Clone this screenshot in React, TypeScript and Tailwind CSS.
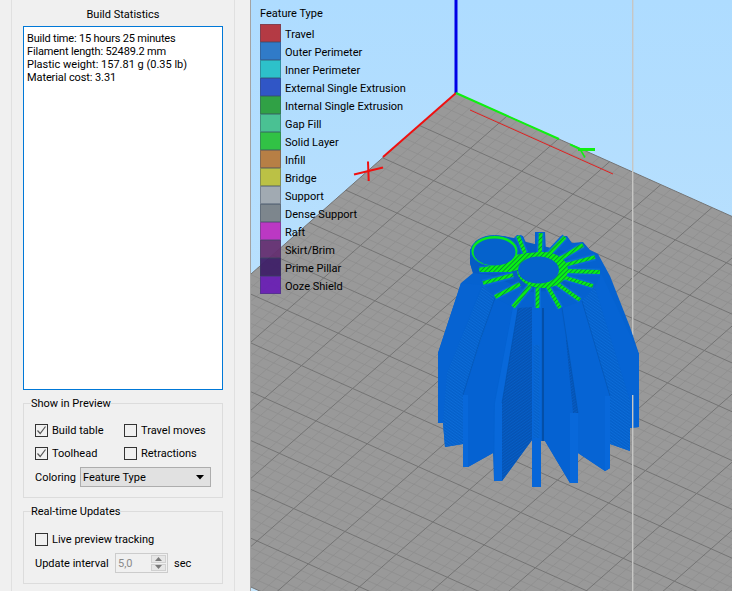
import React from "react";

const legend: [string, string][] = [
  ["Travel", "#b5323a"],
  ["Outer Perimeter", "#2a76c6"],
  ["Inner Perimeter", "#26c0c8"],
  ["External Single Extrusion", "#2a4fc4"],
  ["Internal Single Extrusion", "#2a9e3c"],
  ["Gap Fill", "#45c08e"],
  ["Solid Layer", "#2bc13c"],
  ["Infill", "#b87a3c"],
  ["Bridge", "#bcc03c"],
  ["Support", "#a0a8ae"],
  ["Dense Support", "#7a8288"],
  ["Raft", "#bc30c0"],
  ["Skirt/Brim", "#653070"],
  ["Prime Pillar", "#3f2068"],
  ["Ooze Shield", "#6a20b4"],
];

function Check({ on, label, w }: { on?: boolean; label: string; w?: string }) {
  return (
    <div className={`flex items-center whitespace-nowrap ${w ?? ""}`}>
      <span className="w-[13px] h-[13px] border border-[#333333] bg-[#f0f0f0] flex items-center justify-center shrink-0">
        {on && (
          <svg width="11" height="11" viewBox="0 0 11 11" fill="none">
            <path d="M1.5 5.5 L4.2 8.5 L9.5 1.5" stroke="#555555" strokeWidth="1.2" />
          </svg>
        )}
      </span>
      <span className="ml-1 pt-px">{label}</span>
    </div>
  );
}

const O = [456, 93];
const U = [51.2, 22.9];
const V = [-36.7, 32.4];
const P = (a: number, b: number) => [O[0] + a * U[0] + b * V[0], O[1] + a * U[1] + b * V[1]];

function gridLines() {
  const lines: React.ReactElement[] = [];
  const A = 12;
  const B = 12;
  for (let i = 0; i <= A * 5; i++) {
    if (i % 5 === 0) continue;
    const [x1, y1] = P(i / 5, 0);
    const [x2, y2] = P(i / 5, B);
    lines.push(<line key={`a${i}`} x1={x1} y1={y1} x2={x2} y2={y2} stroke="#8e8e8e" strokeWidth="0.8" />);
  }
  for (let i = 0; i <= B * 5; i++) {
    if (i % 5 === 0) continue;
    const [x1, y1] = P(0, i / 5);
    const [x2, y2] = P(A, i / 5);
    lines.push(<line key={`b${i}`} x1={x1} y1={y1} x2={x2} y2={y2} stroke="#8e8e8e" strokeWidth="0.8" />);
  }
  for (let i = 0; i <= A; i++) {
    const [x1, y1] = P(i, 0);
    const [x2, y2] = P(i, B);
    lines.push(<line key={`c${i}`} x1={x1} y1={y1} x2={x2} y2={y2} stroke="#747474" strokeWidth="1" />);
  }
  for (let i = 0; i <= B; i++) {
    const [x1, y1] = P(0, i);
    const [x2, y2] = P(A, i);
    lines.push(<line key={`d${i}`} x1={x1} y1={y1} x2={x2} y2={y2} stroke="#747474" strokeWidth="1" />);
  }
  return lines;
}

const spokes = [
  [525, 253, 518, 236],
  [540, 253, 540.7, 233],
  [548, 255, 565, 237],
  [558, 260, 583, 245],
  [565, 265, 595, 257],
  [566, 271, 600, 272],
  [563, 277, 593, 286],
  [556, 283, 580, 300],
  [548, 287, 560, 308],
  [537.5, 288, 537.5, 308],
  [530, 286, 513, 307],
  [520, 284, 495, 297],
  [513, 275, 483, 283],
  [512, 269, 479.5, 269.5],
];

const silhouette =
  "470,250 476,241 487,236 503,236 514,238 517,235 523,236 530,252 535,252 535,232 545,232 546,252 561,236 567,236 572,243 583,242 590,250 598,254 610,276 630,327 639,354 639,427 630,428 630,451 610,444 610,468 605,471 578,453 578,483 570,483 545,441 541,441 541,487 532,487 532,440 502,481 494,481 493,453 468,467 463,467 463,444 445,447 443,423 438,423 438,353 461,283 473,273 470,263";

function Viewport() {
  return (
    <svg width="481" height="591" viewBox="251 0 481 591" className="block">
      <defs>
        <linearGradient id="sky" x1="0" y1="0" x2="0" y2="1">
          <stop offset="0" stopColor="#aedcff" />
          <stop offset="1" stopColor="#c4e4fb" />
        </linearGradient>
        <pattern id="stripe" width="3.2" height="3.2" patternUnits="userSpaceOnUse" patternTransform="rotate(-45)">
          <rect width="3.2" height="3.2" fill="#08f014" />
          <rect width="3.2" height="0.9" fill="#0a8a3c" />
        </pattern>
        <pattern id="hatch" width="2.4" height="2.4" patternUnits="userSpaceOnUse" patternTransform="rotate(-35)">
          <rect width="2.4" height="2.4" fill="#0553b4" />
          <rect width="2.4" height="1" fill="#065ec6" />
        </pattern>
        <pattern id="hatch2" width="2.4" height="2.4" patternUnits="userSpaceOnUse" patternTransform="rotate(35)">
          <rect width="2.4" height="2.4" fill="#0560ca" />
          <rect width="2.4" height="1" fill="#0c6cd8" />
        </pattern>
      </defs>
      <rect x="251" y="0" width="481" height="591" fill="url(#sky)" />
      <polygon points={[P(0, 0), P(12, 0), P(12, 12), P(0, 12)].map((p) => p.join(",")).join(" ")} fill="#999999" />
      {gridLines()}
      <line x1="456" y1="0" x2="456" y2="93" stroke="#0000e6" strokeWidth="3" />
      <line x1="456" y1="93" x2="383" y2="157" stroke="#f01010" strokeWidth="2" />
      <line x1="354" y1="174.5" x2="383" y2="167.5" stroke="#f01010" strokeWidth="2" />
      <line x1="368" y1="161.5" x2="368.7" y2="181" stroke="#f01010" strokeWidth="2" />
      <line x1="456" y1="93" x2="559" y2="139" stroke="#10f010" strokeWidth="2" />
      <line x1="570" y1="144.3" x2="580" y2="149" stroke="#10f010" strokeWidth="2" />
      <line x1="578" y1="149.5" x2="595" y2="149.5" stroke="#10f010" strokeWidth="3" />
      <line x1="580" y1="149" x2="585" y2="157.5" stroke="#10f010" strokeWidth="1.5" />
      <line x1="470" y1="110" x2="613" y2="174" stroke="#e02020" strokeWidth="1" />
      <line x1="632.7" y1="0" x2="632.7" y2="335" stroke="#c6c6c4" strokeWidth="1.4" />

      <polygon points={silhouette} fill="#0562d0" />
      <polygon points="438,353 461,283 482,285 447,373 443,423 438,423" fill="#0663d2" />
      <polygon points="443,423 447,373 483,285 495,298 463,395 463,444 445,447" fill="url(#hatch2)" />
      <polygon points="463,395 495,298 513,307 494,403 493,453 468,467 463,467" fill="#0562d2" />
      <polygon points="463,395 468,395 468,467 463,467" fill="#0868da" />
      <polygon points="495,403 513,307 518,308 502,403 502,481 494,481" fill="#0868da" />
      <polygon points="502,403 518,308 532,307 532,440 502,481" fill="url(#hatch)" />
      <polygon points="532,307 541,307 541,487 532,487" fill="#0666d8" />
      <polygon points="533.5,345 539.5,345 539.5,438 533.5,438" fill="url(#hatch2)" />
      <line x1="543" y1="308" x2="543" y2="441" stroke="#044fa8" strokeWidth="2" />
      <polygon points="545,310 561,310 578,413 570,413 570,483 545,441" fill="#0562d2" />
      <polygon points="570,413 578,413 578,483 570,483" fill="#0868da" />
      <polygon points="566,340 572,340 578,413 573,413" fill="url(#hatch)" />
      <polygon points="578,453 578,413 562,308 582,301 610,396 610,468 605,471" fill="#0664d4" />
      <polygon points="605,396 610,396 610,468 605,471" fill="#0868da" />
      <polygon points="610,444 610,396 582,301 595,287 630,400 630,451" fill="url(#hatch2)" />
      <polygon points="630,428 630,400 595,287 601,273 639,354 639,427" fill="#0664d4" />
      <polyline points="463,395 480,340 495,298" fill="none" stroke="#044fa8" strokeWidth="1" opacity="0.5" />
      <polyline points="502,403 518,308" fill="none" stroke="#044fa8" strokeWidth="1" opacity="0.5" />
      <polyline points="578,413 562,308" fill="none" stroke="#044fa8" strokeWidth="1" opacity="0.5" />
      <polyline points="610,396 582,301" fill="none" stroke="#044fa8" strokeWidth="1" opacity="0.5" />
      <line x1="632.7" y1="395" x2="632.7" y2="591" stroke="#c6c6c4" strokeWidth="1.4" />

      <polygon points="470,250 476,241 487,236 503,236 518,240 568,252 570,290 530,292 490,275 473,273 470,263" fill="#055cc4" />
      {spokes.map((s, i) => (
        <line key={`o${i}`} x1={s[0]} y1={s[1]} x2={s[2]} y2={s[3]} stroke="#0a6ad8" strokeWidth="7" />
      ))}
      <ellipse cx="494.5" cy="251" rx="23.5" ry="15.5" fill="#08e81c" stroke="#0a66d0" strokeWidth="1" />
      <ellipse cx="542.5" cy="270" rx="25.5" ry="18" fill="url(#stripe)" />
      <polygon points="515,255 527,253 543,252 530,258 517,270 510,272 480,272 479,268 502,264" fill="url(#stripe)" />
      {spokes.map((s, i) => (
        <line key={`s${i}`} x1={s[0]} y1={s[1]} x2={s[2]} y2={s[3]} stroke="url(#stripe)" strokeWidth="3.8" />
      ))}
      <ellipse cx="494.5" cy="252" rx="21" ry="13.5" fill="#0562cc" />
      <ellipse cx="538.5" cy="270" rx="20.5" ry="13.5" fill="#0562cc" />
    </svg>
  );
}

export default function App() {
  return (
    <div
      className="w-[732px] h-[591px] flex overflow-hidden bg-[#f0f0f0] text-[11px] leading-[13px] text-black"
      style={{ fontFamily: "Roboto, 'Liberation Sans', sans-serif" }}
    >
      <div className="w-[250px] shrink-0 pl-[11px]">
        <div className="w-[224px] h-[591px] border-x border-[#e0e0e0] px-[11px] flex flex-col">
          <div className="h-[26px] flex items-center justify-center pt-[2px]">Build Statistics</div>
          <div className="h-[364px] border border-[#0078d7] bg-white pl-[3px] pt-[5px]">
            <div className="tracking-[-0.2px]">Build time: 15 hours 25 minutes</div>
            <div className="tracking-[-0.15px]">Filament length: 52489.2 mm</div>
            <div>Plastic weight: 157.81 g (0.35 lb)</div>
            <div className="tracking-[-0.1px]">Material cost: 3.31</div>
          </div>
          <fieldset className="mt-[5px] h-[103px] border border-[#dcdcdc] px-[11px]">
            <legend className="-ml-[4px] px-0 h-[16px] leading-[18px]">Show in Preview</legend>
            <div className="flex mt-[12px]">
              <Check on label="Build table" w="w-[89px]" />
              <Check label="Travel moves" />
            </div>
            <div className="flex mt-[9px]">
              <Check on label="Toolhead" w="w-[89px]" />
              <Check label="Retractions" />
            </div>
            <div className="flex items-center mt-[7px]">
              <span className="w-[45px] whitespace-nowrap pt-px">Coloring</span>
              <div className="w-[131px] h-[20px] bg-[#e1e1e1] border border-[#adadad] flex items-center justify-between pl-[2px] pr-[6px]">
                <span className="pt-px">Feature Type</span>
                <svg width="8" height="5" viewBox="0 0 8 5">
                  <path d="M0 0 H8 L4 4.5 Z" fill="#000000" />
                </svg>
              </div>
            </div>
          </fieldset>
          <fieldset className="mt-[5px] h-[81px] border border-[#dcdcdc] px-[11px]">
            <legend className="-ml-[4px] px-0 h-[16px] leading-[18px]">Real-time Updates</legend>
            <div className="mt-[13px]">
              <Check label="Live preview tracking" />
            </div>
            <div className="flex items-center mt-[7px]">
              <span className="w-[80px] whitespace-nowrap pt-px">Update interval</span>
              <div className="w-[53px] h-[20px] bg-[#f0f0f0] border border-[#cccccc] flex items-center justify-between pl-[2px] pr-px text-[#8a8a8a]">
                <span className="pt-px">5,0</span>
                <div className="w-[15px] h-[16px] flex flex-col gap-px">
                  <div className="h-[8px] bg-[#e6e6e6] border border-[#d0d0d0] flex items-center justify-center">
                    <svg width="7" height="4" viewBox="0 0 7 4"><path d="M0 4 L3.5 0 L7 4 Z" fill="#7a7a7a" /></svg>
                  </div>
                  <div className="h-[8px] bg-[#e6e6e6] border border-[#d0d0d0] flex items-center justify-center">
                    <svg width="7" height="4" viewBox="0 0 7 4"><path d="M0 0 L3.5 4 L7 0 Z" fill="#7a7a7a" /></svg>
                  </div>
                </div>
              </div>
              <span className="ml-[6px] pt-px">sec</span>
            </div>
          </fieldset>
        </div>
      </div>
      <div className="relative w-[482px] h-[591px] border-l border-[#a3a3a3]">
        <Viewport />
        <div className="absolute left-[9px] top-[7px]">
          <div className="h-[13px] leading-[13px]">Feature Type</div>
          <div className="mt-[3.5px] flex flex-col">
            {legend.map(([name, c]) => (
              <div key={name} className="flex items-center h-[18px]">
                <span
                  className="w-[21px] h-[18px] border border-[#33415a66] opacity-95"
                  style={{ backgroundColor: c }}
                />
                <span className="ml-[4px] pt-[3px]">{name}</span>
              </div>
            ))}
          </div>
        </div>
      </div>
    </div>
  );
}
